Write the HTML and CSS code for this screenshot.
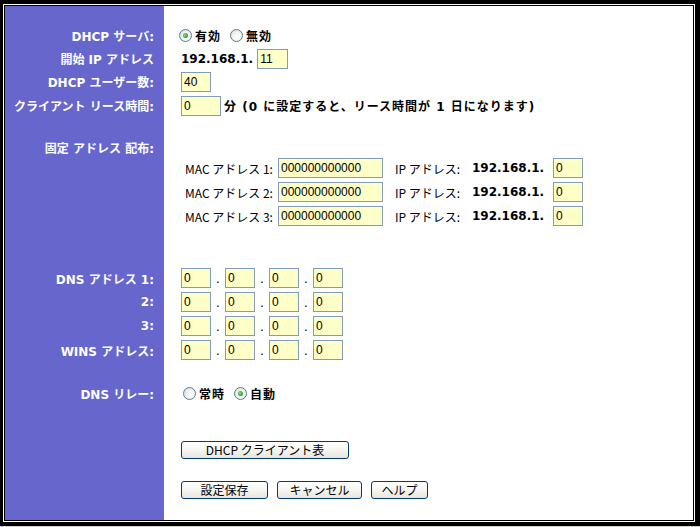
FILE: index.html
```html
<!DOCTYPE html>
<html lang="ja">
<head>
<meta charset="utf-8">
<title>DHCP 設定</title>
<link rel="stylesheet" href="styles.css">
</head>
<body>
<div class="frame">
  <div class="panel">
    <div class="row h23">
      <div class="label">DHCP サーバ:</div>
      <div class="field">
        <label class="radio"><span class="dot on"></span>有効</label>
        <label class="radio"><span class="dot"></span>無効</label>
      </div>
    </div>
    <div class="row h23">
      <div class="label">開始 IP アドレス</div>
      <div class="field">
        <span class="ip">192.168.1.</span><input class="box w31" value="11">
      </div>
    </div>
    <div class="row h23">
      <div class="label">DHCP ユーザー数:</div>
      <div class="field"><input class="box w30" value="40"></div>
    </div>
    <div class="row h25">
      <div class="label">クライアント リース時間:</div>
      <div class="field">
        <input class="box w40" value="0"><span class="note">分 (0 に設定すると、リース時間が 1 日になります)</span>
      </div>
    </div>

    <div class="row h19 gap20">
      <div class="label">固定 アドレス 配布:</div>
      <div class="field"></div>
    </div>
    <div class="row">
      <div class="label"></div>
      <div class="field mac-grid">
        <span class="small">MAC アドレス 1:</span><input class="box w105" value="000000000000">
        <span class="small">IP アドレス:</span><span class="ip">192.168.1.</span><input class="box w30" value="0">
        <span class="small">MAC アドレス 2:</span><input class="box w105" value="000000000000">
        <span class="small">IP アドレス:</span><span class="ip">192.168.1.</span><input class="box w30" value="0">
        <span class="small">MAC アドレス 3:</span><input class="box w105" value="000000000000">
        <span class="small">IP アドレス:</span><span class="ip">192.168.1.</span><input class="box w30" value="0">
      </div>
    </div>

    <div class="row h24 gap38">
      <div class="label">DNS アドレス 1:</div>
      <div class="field quad">
        <input class="box w30" value="0"><span class="sep">.</span><input class="box w30" value="0"><span class="sep">.</span><input class="box w30" value="0"><span class="sep">.</span><input class="box w30" value="0">
      </div>
    </div>
    <div class="row h24">
      <div class="label">2:</div>
      <div class="field quad">
        <input class="box w30" value="0"><span class="sep">.</span><input class="box w30" value="0"><span class="sep">.</span><input class="box w30" value="0"><span class="sep">.</span><input class="box w30" value="0">
      </div>
    </div>
    <div class="row h24">
      <div class="label">3:</div>
      <div class="field quad">
        <input class="box w30" value="0"><span class="sep">.</span><input class="box w30" value="0"><span class="sep">.</span><input class="box w30" value="0"><span class="sep">.</span><input class="box w30" value="0">
      </div>
    </div>
    <div class="row h24">
      <div class="label">WINS アドレス:</div>
      <div class="field quad">
        <input class="box w30" value="0"><span class="sep">.</span><input class="box w30" value="0"><span class="sep">.</span><input class="box w30" value="0"><span class="sep">.</span><input class="box w30" value="0">
      </div>
    </div>

    <div class="row h24 gap19">
      <div class="label">DNS リレー:</div>
      <div class="field relay">
        <label class="radio"><span class="dot"></span>常時</label>
        <label class="radio"><span class="dot on"></span>自動</label>
      </div>
    </div>

    <div class="row h22 gap34">
      <div class="label"></div>
      <div class="field"><button class="btn w168">DHCP クライアント表</button></div>
    </div>
    <div class="row h22 gap18">
      <div class="label"></div>
      <div class="field buttons">
        <button class="btn w87">設定保存</button>
        <button class="btn w85">キャンセル</button>
        <button class="btn w57">ヘルプ</button>
      </div>
    </div>
  </div>
</div>
</body>
</html>
```

FILE: styles.css
```css
html {
  background: #d4d0c8;
}

body {
  margin: 0;
  font-family: "DejaVu Sans", "Noto Sans CJK JP", sans-serif;
  font-size: 12px;
  color: #000;
}

/* double black rule round the whole form */
.frame {
  width: 700px;
  height: 526px;
  box-sizing: border-box;
  border: solid #000;
  border-width: 4px 5px 4px 3px;
  padding: 1px;
  background: #fff;
}

.panel {
  height: 100%;
  box-sizing: border-box;
  border: 1px solid #000;
  padding-top: 18px;
  background: linear-gradient(to right, #6666cc 0, #6666cc 159px, #fff 159px);
}

.row {
  display: flex;
  align-items: center;
}

.h19 { height: 19px; }
.h22 { height: 22px; }
.h23 { height: 23px; }
.h24 { height: 24px; }
.h25 { height: 25px; }

.gap18 { margin-top: 18px; }
.gap19 { margin-top: 19px; }
.gap20 { margin-top: 20px; }
.gap34 { margin-top: 34px; }
.gap38 { margin-top: 38px; }

.label {
  flex: 0 0 159px;
  box-sizing: border-box;
  padding-right: 10px;
  text-align: right;
  color: #fff;
  font-weight: bold;
  white-space: nowrap;
}

.field {
  display: flex;
  align-items: center;
  padding-left: 17px;
  white-space: nowrap;
}

.ip {
  font-weight: bold;
  margin-right: 4px;
}

.note {
  font-weight: bold;
  margin-left: 3px;
  letter-spacing: 1px;
}

.small {
  font-family: "Noto Sans CJK JP", sans-serif;
  font-size: 12px;
}

/* yellow text boxes */
.box {
  box-sizing: border-box;
  height: 20px;
  margin: 0;
  padding: 0 2px;
  border: 1px solid #7f9db9;
  background: #ffffc8;
  font-family: "Liberation Sans", sans-serif;
  font-size: 12px;
  color: #000;
}

.w30 { width: 30px; }
.w31 { width: 31px; }
.w40 { width: 40px; }
.w105 { width: 105px; }

/* radio buttons */
.radio {
  display: flex;
  align-items: center;
  font-weight: bold;
  letter-spacing: 1px;
  margin-right: 9px;
}

.radio:first-child {
  margin-left: -2px;
}

.dot {
  width: 13px;
  height: 13px;
  box-sizing: border-box;
  border: 1px solid #5a7a9e;
  border-radius: 50%;
  background: radial-gradient(circle at 60% 60%, #fff 0, #f2f2ee 45%, #d6d5cc 100%);
  margin-right: 3px;
  position: relative;
}

.dot.on::after {
  content: "";
  position: absolute;
  left: 3px;
  top: 3px;
  width: 5px;
  height: 5px;
  border-radius: 50%;
  background: radial-gradient(circle at 40% 40%, #8ee08e 0, #2fa82f 60%, #1a8a1a 100%);
}

.relay {
  padding-left: 21px;
}

/* static address table */
.mac-grid {
  display: grid;
  grid-template-columns: 93px 117px 77px 81px 30px;
  grid-auto-rows: 24px;
  align-items: center;
  padding-left: 21px;
  margin-top: -1px;
}

.mac-grid .ip {
  margin-right: 0;
}

.quad .sep {
  width: 14px;
  text-align: center;
  align-self: flex-end;
  line-height: 14px;
  padding-bottom: 2px;
}

/* push buttons */
.btn {
  box-sizing: border-box;
  height: 18px;
  margin: 0;
  padding: 0;
  border: 1px solid #003c74;
  border-radius: 3px;
  background: linear-gradient(#ffffff 0, #f6f6f2 50%, #e6e4dc 100%);
  font-family: "Noto Sans CJK JP", sans-serif;
  font-size: 12px;
  line-height: 16px;
  color: #000;
}

.w168 { width: 168px; }
.w87 { width: 87px; }
.w85 { width: 85px; }
.w57 { width: 57px; }

.buttons {
  gap: 9px;
}
```
